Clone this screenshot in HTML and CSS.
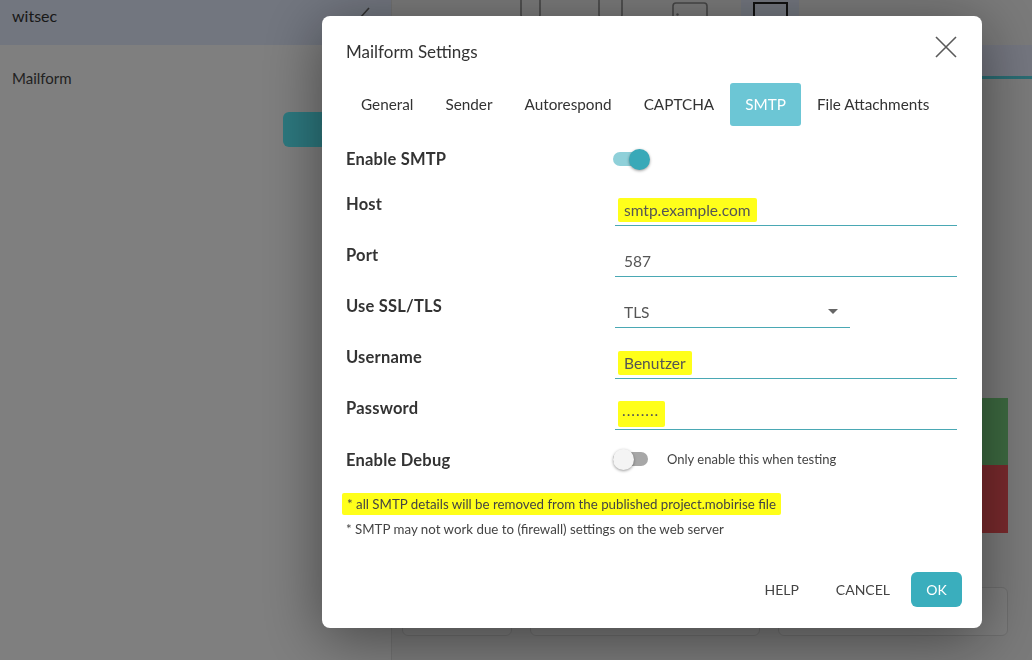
FILE: index.html
```html
<!DOCTYPE html>
<html lang="en">
<head>
  <meta charset="UTF-8" />
  <title>Mailform Settings</title>
  <link rel="stylesheet" href="styles.css">
</head>
<body>
  <div class="app">
    <aside class="sidebar">
      <div class="sidebar-head">
        <span>witsec</span>
        <svg class="head-icon" width="14" height="20" viewBox="0 0 14 20"><path d="M12 6 L3 16" fill="none" stroke="#666" stroke-width="1.6"/></svg>
      </div>
      <div class="sidebar-item">Mailform</div>
      <div class="sidebar-actions">
        <button class="edit-btn">Edit</button>
      </div>
    </aside>

    <main class="workspace">
      <div class="toolbar">
        <div class="device">
          <svg width="58" height="45" viewBox="0 0 58 45"><rect x="20" y="-6" width="19" height="24" rx="3" fill="none" stroke="#8e8e8e" stroke-width="1.6"/></svg>
        </div>
        <div class="device">
          <svg width="58" height="45" viewBox="0 0 58 45"><rect x="18" y="-6" width="23" height="24" rx="3" fill="none" stroke="#8e8e8e" stroke-width="1.6"/></svg>
        </div>
        <div class="device">
          <svg width="58" height="45" viewBox="0 0 58 45"><rect x="12" y="3" width="34" height="22" rx="3" fill="none" stroke="#8e8e8e" stroke-width="1.6"/><circle cx="16.5" cy="14.5" r="1.2" fill="#8e8e8e"/></svg>
        </div>
        <div class="device active">
          <svg width="58" height="45" viewBox="0 0 58 45"><rect x="13" y="3" width="33" height="24" fill="none" stroke="#222" stroke-width="2"/></svg>
        </div>
      </div>
      <div class="pagebar"></div>
      <div class="canvas">
        <div class="status">
          <div class="status-ok"></div>
          <div class="status-err"></div>
        </div>
      </div>
      <div class="cards">
        <div class="card card-sm"></div>
        <div class="card"></div>
        <div class="card"></div>
      </div>
    </main>
  </div>

  <div class="backdrop"></div>

  <div class="modal">
    <div class="modal-head">
      <h1 class="modal-title">Mailform Settings</h1>
      <svg class="close" width="22" height="22" viewBox="0 0 22 22"><path d="M1 1 L21 21 M21 1 L1 21" stroke="#5a5a5a" stroke-width="1.6"/></svg>
    </div>

    <nav class="tabs">
      <span class="tab">General</span>
      <span class="tab">Sender</span>
      <span class="tab">Autorespond</span>
      <span class="tab">CAPTCHA</span>
      <span class="tab active">SMTP</span>
      <span class="tab">File Attachments</span>
    </nav>

    <div class="form">
      <div class="row row-first">
        <label>Enable SMTP</label>
        <div class="switch on"><span class="track"></span><span class="knob"></span></div>
      </div>
      <div class="row">
        <label>Host</label>
        <div class="field"><span class="mark">smtp.example.com</span></div>
      </div>
      <div class="row">
        <label>Port</label>
        <div class="field">587</div>
      </div>
      <div class="row">
        <label>Use SSL/TLS</label>
        <div class="field select">TLS<span class="caret"></span></div>
      </div>
      <div class="row">
        <label>Username</label>
        <div class="field"><span class="mark">Benutzer</span></div>
      </div>
      <div class="row">
        <label>Password</label>
        <div class="field"><span class="mark dots">........</span></div>
      </div>
      <div class="row row-debug">
        <label>Enable Debug</label>
        <div class="switch-line">
          <div class="switch"><span class="track"></span><span class="knob"></span></div>
          <span class="hint">Only enable this when testing</span>
        </div>
      </div>
    </div>

    <div class="notes">
      <p><span class="mark note-mark">* all SMTP details will be removed from the published project.mobirise file</span></p>
      <p>* SMTP may not work due to (firewall) settings on the web server</p>
    </div>

    <div class="modal-foot">
      <button class="btn-text">HELP</button>
      <button class="btn-text">CANCEL</button>
      <button class="btn-ok">OK</button>
    </div>
  </div>
</body>
</html>
```

FILE: styles.css
```css
body {
  margin: 0;
  font-family: Lato, "Open Sans", sans-serif;
  color: #333;
  overflow: hidden;
}

/* app behind the dialog */
.app {
  display: grid;
  grid-template-columns: 392px 1fr;
  height: 100vh;
  background: #f5f5f5;
}

.sidebar {
  background: #fff;
  border-right: 1px solid #e4e4e4;
}

.sidebar-head {
  height: 45px;
  background: #e4ecfe;
  display: flex;
  justify-content: space-between;
  padding: 0 20px 0 12px;
  font-size: 16px;
  color: #333;
  line-height: 32px;
}

.head-icon {
  margin-top: 2px;
}

.sidebar-item {
  padding: 24px 12px 0;
  font-size: 15px;
  color: #444;
}

.sidebar-actions {
  display: flex;
  justify-content: flex-end;
  padding: 25px 8px 0 0;
}

.edit-btn {
  width: 100px;
  height: 35px;
  border: none;
  border-radius: 6px;
  background: #5af2ff;
  color: #d8ffff;
  font: 15px Lato, sans-serif;
}

.workspace {
  display: grid;
  grid-template-rows: 45px 34px 1fr 81px;
}

.toolbar {
  display: flex;
  gap: 22px;
  padding-left: 109px;
  overflow: hidden;
}

.device {
  width: 58px;
  height: 45px;
}
.device.active {
  background: #e6eeff;
}

.pagebar {
  background: #e8ecfe;
  border-bottom: 3px solid #54d8e6;
}

.canvas {
  display: flex;
  justify-content: flex-end;
  padding-right: 24px;
}

.status {
  width: 60px;
  margin-top: 319px;
}
.status-ok {
  height: 67px;
  background: #7ad482;
}
.status-err {
  height: 68px;
  background: #f4545a;
}

.cards {
  display: flex;
  gap: 18px;
  padding: 8px 24px 24px 10px;
}

.card {
  flex: 1;
  border: 1px solid #ddd;
  border-radius: 6px;
  background: #fafafa;
}
.card-sm {
  flex: 0 0 108px;
}

.backdrop {
  position: fixed;
  inset: 0;
  background: rgba(0, 0, 0, 0.5);
}

/* dialog */
.modal {
  position: fixed;
  left: 322px;
  top: 16px;
  width: 660px;
  height: 612px;
  box-sizing: border-box;
  padding: 24px 20px 21px 24px;
  background: #fff;
  border-radius: 8px;
  box-shadow: 0 10px 60px rgba(0, 0, 0, 0.45);
  display: flex;
  flex-direction: column;
}

.modal-head {
  display: flex;
  justify-content: space-between;
  align-items: flex-start;
}

.modal-title {
  margin: 0;
  font-size: 17px;
  font-weight: 400;
  line-height: 22px;
  color: #333;
  padding-top: 1px;
}

.close {
  margin: -4px 5px 0 0;
}

.tabs {
  display: flex;
  margin-top: 20px;
  height: 43px;
}

.tab {
  padding: 0 16px;
  line-height: 43px;
  font-size: 15.3px;
  color: #333;
}
.tab:first-child {
  padding-left: 15px;
}
.tab.active {
  background: #6cc6d5;
  color: #fff;
  border-radius: 3px;
  padding: 0 15px;
}

.form {
  margin-top: 23px;
  display: flex;
  flex-direction: column;
}

.row {
  display: grid;
  grid-template-columns: 269px 342px;
  margin-bottom: 19px;
}
.row-first {
  margin-bottom: 25px;
}
.row-debug {
  margin-top: 1px;
  margin-bottom: 0;
}

.row label {
  font-size: 16.5px;
  font-weight: 700;
  line-height: 20px;
  letter-spacing: 0.2px;
  color: #333;
}

.field {
  height: 32px;
  box-sizing: border-box;
  padding-left: 9px;
  border-bottom: 1px solid #4aa8b4;
  display: flex;
  align-items: center;
  font-size: 15.5px;
  color: #555;
}

.field.select {
  width: 235px;
  position: relative;
}

.caret {
  position: absolute;
  right: 12px;
  top: 13px;
  border-left: 5px solid transparent;
  border-right: 5px solid transparent;
  border-top: 5px solid #666;
}

.mark {
  background: #ffff1a;
  padding: 3px 6px;
  margin-left: -6px;
  border-radius: 2px;
}
.dots {
  letter-spacing: 1px;
  padding: 0 6px 8px 4px;
}

.switch {
  position: relative;
  width: 38px;
  height: 20px;
  margin-left: -2px;
}
.switch .track {
  position: absolute;
  left: 0;
  top: 3px;
  width: 35px;
  height: 14px;
  border-radius: 7px;
  background: #a7a7a7;
}
.switch .knob {
  position: absolute;
  left: 0;
  top: 0;
  width: 21px;
  height: 21px;
  border-radius: 50%;
  background: #f4f4f4;
  box-shadow: 0 1px 3px rgba(0, 0, 0, 0.4);
}
.switch.on .track {
  background: #8fd0d9;
}
.switch.on .knob {
  left: 16px;
  background: #39a9b8;
}

.switch-line {
  display: flex;
  align-items: center;
  gap: 16px;
  margin-top: -2px;
}

.hint {
  font-size: 13px;
  color: #444;
}

.notes {
  margin-top: 22px;
}
.notes p {
  margin: 0;
  font-size: 13.3px;
  line-height: 25px;
  color: #444;
}
.note-mark {
  padding: 3px 5px;
  margin-left: -4px;
}

.modal-foot {
  margin-top: auto;
  display: flex;
  justify-content: flex-end;
  gap: 5px;
}

.btn-text {
  height: 35px;
  padding: 0 16px;
  border: none;
  background: none;
  font: 14px Lato, sans-serif;
  color: #444;
}

.btn-ok {
  width: 51px;
  height: 35px;
  border: none;
  border-radius: 6px;
  background: #3aaebd;
  color: #fff;
  font: 14px Lato, sans-serif;
}
```
